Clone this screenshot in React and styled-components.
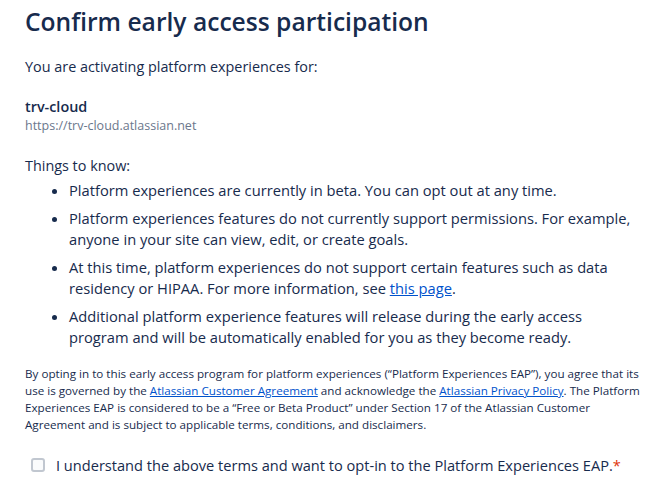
import React, { useState } from 'react';
import styled, { createGlobalStyle } from 'styled-components';

const GlobalStyle = createGlobalStyle`
  body {
    margin: 0;
    background: #ffffff;
    font-family: "Open Sans", "Liberation Sans", sans-serif;
    color: #172b4d;
  }
`;

const Page = styled.div`
  display: flex;
  flex-direction: column;
  padding: 6px 18px 0 25px;
  width: 620px;
`;

const Title = styled.h1`
  margin: 0;
  font-size: 24.6px;
  line-height: 32px;
  font-weight: 600;
  color: #172b4d;
`;

const Text = styled.p`
  margin: ${(p) => p.$mt || 0}px 0 0 0;
  font-size: 14.4px;
  line-height: 20px;
  font-weight: ${(p) => (p.$bold ? 600 : 400)};
`;

const SiteUrl = styled.div`
  font-size: 12.5px;
  line-height: 18px;
  color: #6b778c;
`;

const List = styled.ul`
  margin: 4px 0 0 0;
  padding: 0 10px 0 44px;
  display: flex;
  flex-direction: column;
  gap: 7px;
`;

const Item = styled.li`
  font-size: 14.7px;
  line-height: 21px;
`;

const Link = styled.a`
  color: #0052cc;
  text-decoration: underline;
  cursor: pointer;
`;

const Legal = styled.p`
  margin: 17px 0 0 0;
  font-size: 11.65px;
  line-height: 17px;
  color: #172b4d;
`;

const CheckRow = styled.label`
  display: flex;
  align-items: center;
  gap: 11px;
  margin: 22px 0 0 6px;
  font-size: 14.6px;
  line-height: 20px;
  cursor: pointer;
`;

const Box = styled.span`
  width: 14px;
  height: 14px;
  box-sizing: border-box;
  border: 2px solid ${(p) => (p.$checked ? '#0052cc' : '#c1c7d0')};
  background: ${(p) => (p.$checked ? '#0052cc' : '#fafbfc')};
  border-radius: 3px;
  flex: none;
`;

const Required = styled.span`
  color: #de350b;
`;

export default function App() {
  const [checked, setChecked] = useState(false);

  return (
    <Page>
      <GlobalStyle />
      <Title>Confirm early access participation</Title>
      <Text $mt={19}>You are activating platform experiences for:</Text>

      <Text $mt={20} $bold>trv-cloud</Text>
      <SiteUrl>https://trv-cloud.atlassian.net</SiteUrl>

      <Text $mt={21}>Things to know:</Text>
      <List>
        <Item>Platform experiences are currently in beta. You can opt out at any time.</Item>
        <Item>
          Platform experiences features do not currently support permissions. For example,
          anyone in your site can view, edit, or create goals.
        </Item>
        <Item>
          At this time, platform experiences do not support certain features such as data
          residency or HIPAA. For more information, see <Link>this page</Link>.
        </Item>
        <Item>
          Additional platform experience features will release during the early access
          program and will be automatically enabled for you as they become ready.
        </Item>
      </List>

      <Legal>
        By opting in to this early access program for platform experiences (“Platform
        Experiences EAP”), you agree that its use is governed by the{' '}
        <Link>Atlassian Customer Agreement</Link> and acknowledge the{' '}
        <Link>Atlassian Privacy Policy</Link>. The Platform Experiences EAP is considered to be a
        “Free or Beta Product” under Section 17 of the Atlassian Customer Agreement and is
        subject to applicable terms, conditions, and disclaimers.
      </Legal>

      <CheckRow onClick={() => setChecked(!checked)}>
        <Box $checked={checked} />
        <span>
          I understand the above terms and want to opt-in to the Platform Experiences EAP.
          <Required>*</Required>
        </span>
      </CheckRow>
    </Page>
  );
}
